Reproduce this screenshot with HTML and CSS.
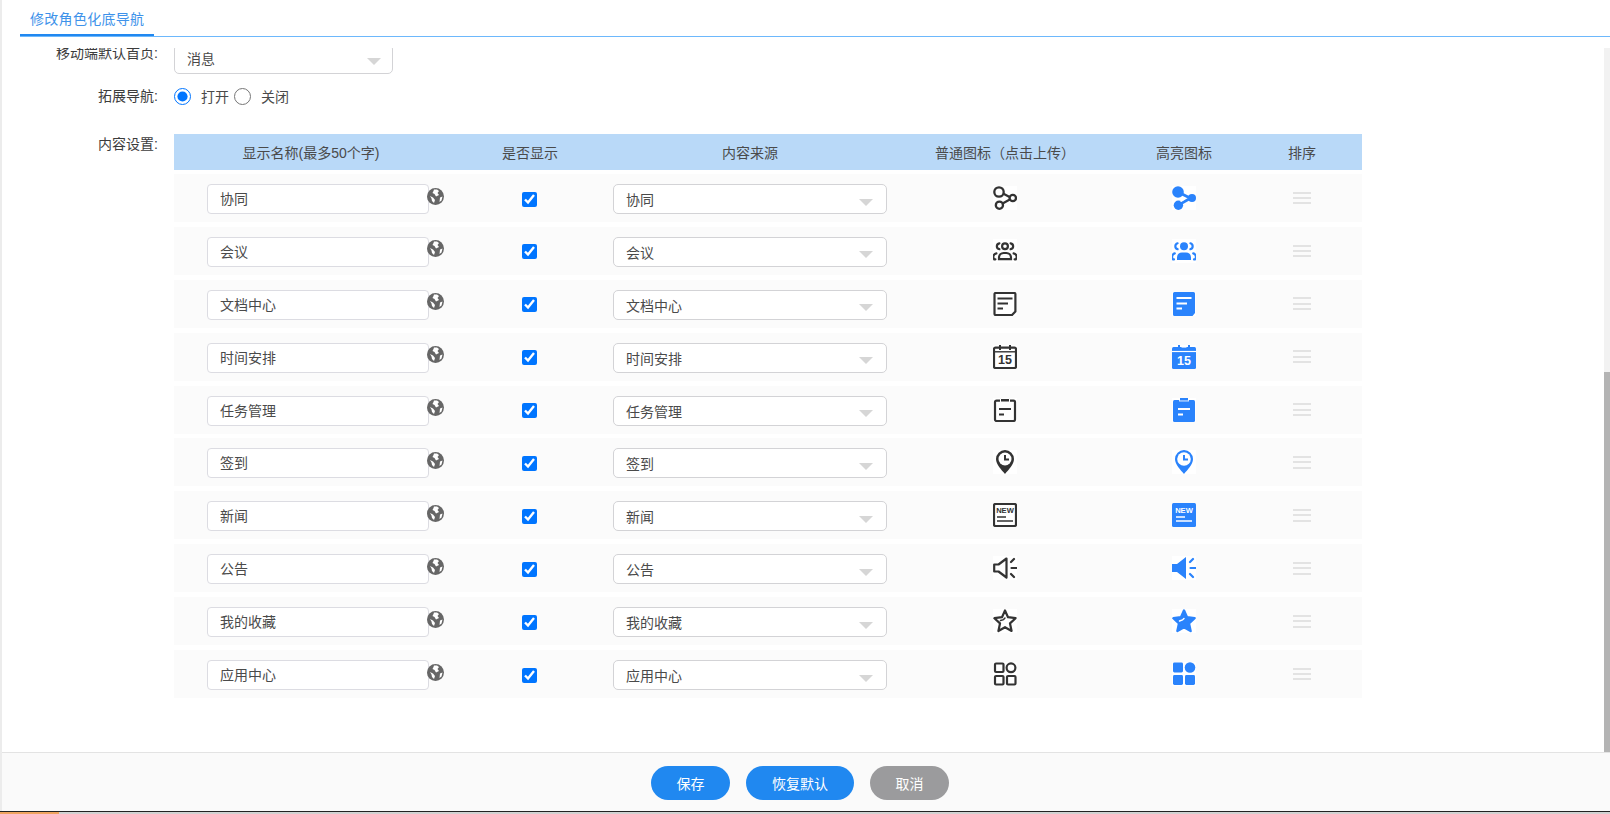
FILE: index.html
```html
<!DOCTYPE html>
<html lang="zh-CN">
<head>
<meta charset="utf-8">
<title>修改角色化底导航</title>
<link rel="stylesheet" href="styles.css">
</head>
<body>
<svg class="defs" width="0" height="0" aria-hidden="true">
  <symbol id="globe" viewBox="0 0 17 17">
    <circle cx="8.5" cy="8.5" r="8.5" fill="#666"/>
    <path d="M7 1.5 10 1.5 12 3 10.5 5 12 7 9 8.5 7.5 6 5.5 5 6.5 3Z M3 8 6 9.5 8 12 7 15 5 13 4.5 10.5Z M13 9.5 15.5 8.5 14.5 12.5 12.5 14Z" fill="#fff"/>
  </symbol>

  <symbol id="i-link" viewBox="0 0 24 24">
    <rect width="24" height="24" fill="#fff"/>
    <g fill="none" stroke="currentColor" stroke-width="2.3">
      <circle cx="6" cy="6" r="4.7"/><circle cx="19.8" cy="12" r="3.2"/><circle cx="6.4" cy="19.2" r="3.6"/>
      <path d="M10.5 7.8 16.6 11M9.6 17.4 16.8 13.6"/>
    </g>
  </symbol>
  <symbol id="f-link" viewBox="0 0 24 24">
    <rect width="24" height="24" fill="#fff"/>
    <g fill="currentColor"><circle cx="6" cy="6" r="5.8"/><circle cx="20" cy="12" r="4"/><circle cx="6.4" cy="19.2" r="4.7"/></g>
    <path d="M10 8 17 11.5M9.5 17.4 17 13" fill="none" stroke="currentColor" stroke-width="2.8"/>
    <path d="M8.5 15.4 12.5 13" stroke="#fff" stroke-width="1.2"/>
  </symbol>

  <symbol id="i-team" viewBox="0 0 24 24">
    <rect width="24" height="24" fill="#fff"/>
    <g fill="none" stroke="currentColor" stroke-width="2.2" stroke-linecap="round">
      <circle cx="12" cy="7.3" r="2.9"/>
      <path d="M6.4 4.3C3 5 3 9.6 6.4 10.2M17.6 4.3C21 5 21 9.6 17.6 10.2"/>
      <path d="M6 20.2V18.6A4.6 4.6 0 0 1 10.6 14H13.4A4.6 4.6 0 0 1 18 18.6V20.2Z"/>
      <path d="M3.4 14.4A3.6 3.6 0 0 0 1.2 20.3H2.4M20.6 14.4A3.6 3.6 0 0 1 22.8 20.3H21.6"/>
    </g>
  </symbol>
  <symbol id="f-team" viewBox="0 0 24 24">
    <rect width="24" height="24" fill="#fff"/>
    <circle cx="12" cy="7.3" r="4" fill="currentColor"/>
    <path d="M5 21V18.4A5 5 0 0 1 10 13.4H14A5 5 0 0 1 19 18.4V21Z" fill="currentColor"/>
    <g fill="none" stroke="currentColor" stroke-width="2.2" stroke-linecap="round">
      <path d="M5.6 4.3C2.6 5 2.6 9.6 5.6 10.2M18.4 4.3C21.4 5 21.4 9.6 18.4 10.2"/>
      <path d="M2.8 14.4A3.6 3.6 0 0 0 1.1 20.4H2M21.2 14.4A3.6 3.6 0 0 1 22.9 20.4H22"/>
    </g>
  </symbol>

  <symbol id="i-doc" viewBox="0 0 24 24">
    <rect width="24" height="24" fill="#fff"/>
    <path d="M2.5 1H21.4A1 1 0 0 1 22.4 2V19.5L19 23H2.5A1 1 0 0 1 1.5 22V2A1 1 0 0 1 2.5 1Z" fill="none" stroke="currentColor" stroke-width="2.2" stroke-linejoin="round"/>
    <path d="M4.5 6.5H19.5M4.5 11.5H15M4.5 16.5H10" stroke="currentColor" stroke-width="2"/>
  </symbol>
  <symbol id="f-doc" viewBox="0 0 24 24">
    <rect width="24" height="24" fill="#fff"/>
    <path d="M2.5 0H21.5A1.5 1.5 0 0 1 23 1.5V21L20.5 24H2.5A1.5 1.5 0 0 1 1 22.5V1.5A1.5 1.5 0 0 1 2.5 0Z" fill="currentColor"/>
    <path d="M4.5 6H19.5M4.5 11.5H15M4.5 16.5H10" stroke="#fff" stroke-width="2"/>
  </symbol>

  <symbol id="i-cal" viewBox="0 0 24 24">
    <rect width="24" height="24" fill="#fff"/>
    <rect x="1" y="2.6" width="22" height="20.4" rx="1.5" fill="none" stroke="currentColor" stroke-width="2.2"/>
    <path d="M7 0V5M17 0V5" stroke="currentColor" stroke-width="2"/>
    <path d="M1 6.8H23" stroke="currentColor" stroke-width="1.4"/>
  </symbol>
  <symbol id="f-cal" viewBox="0 0 24 24">
    <rect width="24" height="24" fill="#fff"/>
    <rect y="2" width="24" height="22" rx="1.5" fill="currentColor"/>
    <path d="M0 6.5H24" stroke="#fff" stroke-width="1.2"/>
    <path d="M7 0V4M17 0V4" stroke="currentColor" stroke-width="2"/>
    <path d="M9.5 2H14.5" stroke="#fff" stroke-width="1.2"/>
  </symbol>

  <symbol id="i-task" viewBox="0 0 24 24">
    <rect width="24" height="24" fill="#fff"/>
    <rect x="2" y="2.6" width="20" height="20.4" rx="1.5" fill="none" stroke="currentColor" stroke-width="2.2"/>
    <path d="M7.5 .5H16.5V4H7.5Z" fill="currentColor" stroke="#fff" stroke-width="1"/>
    <path d="M6 11H18M6 16.5H11" stroke="currentColor" stroke-width="2"/>
  </symbol>
  <symbol id="f-task" viewBox="0 0 24 24">
    <rect width="24" height="24" fill="#fff"/>
    <rect x="1" y="2" width="22" height="22" rx="1.5" fill="currentColor"/>
    <path d="M7 2.8H17" stroke="#fff" stroke-width="1.2"/>
    <path d="M8 0H16V2.4H8Z" fill="currentColor"/>
    <path d="M6 11H18M6 16.5H11" stroke="#fff" stroke-width="2"/>
  </symbol>

  <symbol id="i-pin" viewBox="0 0 24 24">
    <rect width="24" height="24" fill="#fff"/>
    <path d="M12 0A9 9 0 0 0 3 9C3 14.5 8.5 19.8 12 24C15.5 19.8 21 14.5 21 9A9 9 0 0 0 12 0Z" fill="currentColor"/>
    <circle cx="12" cy="9" r="6.5" fill="#fff"/>
    <path d="M12 5V9.5H16" fill="none" stroke="currentColor" stroke-width="2"/>
  </symbol>
  <symbol id="f-pin" viewBox="0 0 24 24">
    <rect width="24" height="24" fill="#fff"/>
    <path d="M12 0A9 9 0 0 0 3 9C3 14.5 8.5 19.8 12 24C15.5 19.8 21 14.5 21 9A9 9 0 0 0 12 0Z" fill="currentColor"/>
    <circle cx="12" cy="9" r="6.8" fill="#fff"/>
    <path d="M12 5V9.5H16" fill="none" stroke="currentColor" stroke-width="2"/>
  </symbol>

  <symbol id="i-news" viewBox="0 0 24 24">
    <rect width="24" height="24" fill="#fff"/>
    <rect x="1" y="1" width="22" height="22" rx="1.5" fill="none" stroke="currentColor" stroke-width="2.2"/>
    <path d="M4 14H13M4 18H20" stroke="currentColor" stroke-width="1.7"/>
  </symbol>
  <symbol id="f-news" viewBox="0 0 24 24">
    <rect width="24" height="24" fill="#fff"/>
    <rect width="24" height="24" rx="1.5" fill="currentColor"/>
    <path d="M4 14H13M4 18H20" stroke="#fff" stroke-width="1.7"/>
  </symbol>

  <symbol id="i-horn" viewBox="0 0 24 24">
    <rect width="24" height="24" fill="#fff"/>
    <path d="M1.2 8.5V15.5H5.5L13.5 21.5V2.5L5.5 8.5Z" fill="none" stroke="currentColor" stroke-width="2.2" stroke-linejoin="round"/>
    <path d="M18 6 21 3M18.5 12H23.5M18 18 21 21" stroke="currentColor" stroke-width="2.2" stroke-linecap="round"/>
  </symbol>
  <symbol id="f-horn" viewBox="0 0 24 24">
    <rect width="24" height="24" fill="#fff"/>
    <path d="M0 8V16H5L14 23V1L5 8Z" fill="currentColor"/>
    <path d="M18 6 21 3M18.5 12H23.5M18 18 21 21" stroke="currentColor" stroke-width="2.2" stroke-linecap="round"/>
  </symbol>

  <symbol id="i-star" viewBox="0 0 24 24">
    <rect width="24" height="24" fill="#fff"/>
    <path d="M12 1.5 15 8.2 22.6 9.2 17 14.4 18.6 22 12 18.2 5.4 22 7 14.4 1.4 9.2 9 8.2Z" fill="none" stroke="currentColor" stroke-width="2.2" stroke-linejoin="round"/>
    <path d="M7.5 11.5 10.5 10.6 12 9" fill="none" stroke="currentColor" stroke-width="1.4" stroke-linecap="round"/>
  </symbol>
  <symbol id="f-star" viewBox="0 0 24 24">
    <rect width="24" height="24" fill="#fff"/>
    <path d="M12 1.5 15 8.2 22.6 9.2 17 14.4 18.6 22 12 18.2 5.4 22 7 14.4 1.4 9.2 9 8.2Z" fill="currentColor" stroke="currentColor" stroke-width="2.4" stroke-linejoin="round"/>
    <path d="M7.5 12 10.5 11 12 9.4" fill="none" stroke="#fff" stroke-width="1.4" stroke-linecap="round"/>
  </symbol>

  <symbol id="i-apps" viewBox="0 0 24 24">
    <rect width="24" height="24" fill="#fff"/>
    <g fill="none" stroke="currentColor" stroke-width="2.2">
      <rect x="2" y="1.5" width="8.5" height="8.5" rx="1"/>
      <circle cx="18" cy="5.8" r="4.4"/>
      <rect x="2" y="14" width="8.5" height="8.5" rx="1"/>
      <rect x="14" y="14" width="8.5" height="8.5" rx="1"/>
    </g>
  </symbol>
  <symbol id="f-apps" viewBox="0 0 24 24">
    <rect width="24" height="24" fill="#fff"/>
    <g fill="currentColor">
      <rect x="1" y=".5" width="10" height="10" rx="1.4"/>
      <circle cx="18" cy="5.5" r="5.3"/>
      <rect x="1" y="13" width="10" height="10" rx="1.4"/>
      <rect x="13" y="13" width="10" height="10" rx="1.4"/>
    </g>
  </symbol>
</svg>

<div class="app">
  <div class="tabs"><div class="tab">修改角色化底导航</div></div>

  <div class="scroller">
    <div class="form">
      <div class="line line-home">
        <div class="label label-top">移动端默认首页:</div>
        <div class="select select-home"><span>消息</span><i class="caret"></i></div>
      </div>
      <div class="line line-radio">
        <div class="label">拓展导航:</div>
        <div class="radios">
          <input class="radio" type="radio" name="ext" checked aria-label="打开"><span class="radio-text">打开</span>
          <input class="radio" type="radio" name="ext" aria-label="关闭"><span class="radio-text">关闭</span>
        </div>
      </div>
      <div class="line line-table">
        <div class="label label-content">内容设置:</div>
        <div class="table">
          <div class="thead">
            <div>显示名称(最多50个字)</div><div>是否显示</div><div>内容来源</div><div>普通图标（点击上传）</div><div>高亮图标</div><div>排序</div>
          </div>
          <div class="tbody">
            <div class="trow">
              <div class="cell-name"><div class="input">协同</div><svg class="globe"><use href="#globe"/></svg></div>
              <div class="cell-c"><input class="check" type="checkbox" checked aria-label="是否显示"></div>
              <div class="cell-c"><div class="select select-row"><span>协同</span><i class="caret"></i></div></div>
              <div class="cell-c"><svg class="ico normal"><use href="#i-link"/></svg></div>
              <div class="cell-c"><svg class="ico hi"><use href="#f-link"/></svg></div>
              <div class="cell-c"><div class="sort"><i></i><i></i><i></i></div></div>
            </div>
            <div class="trow">
              <div class="cell-name"><div class="input">会议</div><svg class="globe"><use href="#globe"/></svg></div>
              <div class="cell-c"><input class="check" type="checkbox" checked aria-label="是否显示"></div>
              <div class="cell-c"><div class="select select-row"><span>会议</span><i class="caret"></i></div></div>
              <div class="cell-c"><svg class="ico normal"><use href="#i-team"/></svg></div>
              <div class="cell-c"><svg class="ico hi"><use href="#f-team"/></svg></div>
              <div class="cell-c"><div class="sort"><i></i><i></i><i></i></div></div>
            </div>
            <div class="trow">
              <div class="cell-name"><div class="input">文档中心</div><svg class="globe"><use href="#globe"/></svg></div>
              <div class="cell-c"><input class="check" type="checkbox" checked aria-label="是否显示"></div>
              <div class="cell-c"><div class="select select-row"><span>文档中心</span><i class="caret"></i></div></div>
              <div class="cell-c"><svg class="ico normal"><use href="#i-doc"/></svg></div>
              <div class="cell-c"><svg class="ico hi"><use href="#f-doc"/></svg></div>
              <div class="cell-c"><div class="sort"><i></i><i></i><i></i></div></div>
            </div>
            <div class="trow">
              <div class="cell-name"><div class="input">时间安排</div><svg class="globe"><use href="#globe"/></svg></div>
              <div class="cell-c"><input class="check" type="checkbox" checked aria-label="是否显示"></div>
              <div class="cell-c"><div class="select select-row"><span>时间安排</span><i class="caret"></i></div></div>
              <div class="cell-c"><svg class="ico normal" viewBox="0 0 24 24"><use href="#i-cal"/><text x="12" y="19.4" class="ico-num">15</text></svg></div>
              <div class="cell-c"><svg class="ico hi" viewBox="0 0 24 24"><use href="#f-cal"/><text x="12" y="19.8" class="ico-num on-fill">15</text></svg></div>
              <div class="cell-c"><div class="sort"><i></i><i></i><i></i></div></div>
            </div>
            <div class="trow">
              <div class="cell-name"><div class="input">任务管理</div><svg class="globe"><use href="#globe"/></svg></div>
              <div class="cell-c"><input class="check" type="checkbox" checked aria-label="是否显示"></div>
              <div class="cell-c"><div class="select select-row"><span>任务管理</span><i class="caret"></i></div></div>
              <div class="cell-c"><svg class="ico normal"><use href="#i-task"/></svg></div>
              <div class="cell-c"><svg class="ico hi"><use href="#f-task"/></svg></div>
              <div class="cell-c"><div class="sort"><i></i><i></i><i></i></div></div>
            </div>
            <div class="trow">
              <div class="cell-name"><div class="input">签到</div><svg class="globe"><use href="#globe"/></svg></div>
              <div class="cell-c"><input class="check" type="checkbox" checked aria-label="是否显示"></div>
              <div class="cell-c"><div class="select select-row"><span>签到</span><i class="caret"></i></div></div>
              <div class="cell-c"><svg class="ico normal"><use href="#i-pin"/></svg></div>
              <div class="cell-c"><svg class="ico hi"><use href="#f-pin"/></svg></div>
              <div class="cell-c"><div class="sort"><i></i><i></i><i></i></div></div>
            </div>
            <div class="trow">
              <div class="cell-name"><div class="input">新闻</div><svg class="globe"><use href="#globe"/></svg></div>
              <div class="cell-c"><input class="check" type="checkbox" checked aria-label="是否显示"></div>
              <div class="cell-c"><div class="select select-row"><span>新闻</span><i class="caret"></i></div></div>
              <div class="cell-c"><svg class="ico normal" viewBox="0 0 24 24"><use href="#i-news"/><text x="12" y="9.8" class="ico-new">NEW</text></svg></div>
              <div class="cell-c"><svg class="ico hi" viewBox="0 0 24 24"><use href="#f-news"/><text x="12" y="9.8" class="ico-new on-fill">NEW</text></svg></div>
              <div class="cell-c"><div class="sort"><i></i><i></i><i></i></div></div>
            </div>
            <div class="trow">
              <div class="cell-name"><div class="input">公告</div><svg class="globe"><use href="#globe"/></svg></div>
              <div class="cell-c"><input class="check" type="checkbox" checked aria-label="是否显示"></div>
              <div class="cell-c"><div class="select select-row"><span>公告</span><i class="caret"></i></div></div>
              <div class="cell-c"><svg class="ico normal"><use href="#i-horn"/></svg></div>
              <div class="cell-c"><svg class="ico hi"><use href="#f-horn"/></svg></div>
              <div class="cell-c"><div class="sort"><i></i><i></i><i></i></div></div>
            </div>
            <div class="trow">
              <div class="cell-name"><div class="input">我的收藏</div><svg class="globe"><use href="#globe"/></svg></div>
              <div class="cell-c"><input class="check" type="checkbox" checked aria-label="是否显示"></div>
              <div class="cell-c"><div class="select select-row"><span>我的收藏</span><i class="caret"></i></div></div>
              <div class="cell-c"><svg class="ico normal"><use href="#i-star"/></svg></div>
              <div class="cell-c"><svg class="ico hi"><use href="#f-star"/></svg></div>
              <div class="cell-c"><div class="sort"><i></i><i></i><i></i></div></div>
            </div>
            <div class="trow">
              <div class="cell-name"><div class="input">应用中心</div><svg class="globe"><use href="#globe"/></svg></div>
              <div class="cell-c"><input class="check" type="checkbox" checked aria-label="是否显示"></div>
              <div class="cell-c"><div class="select select-row"><span>应用中心</span><i class="caret"></i></div></div>
              <div class="cell-c"><svg class="ico normal"><use href="#i-apps"/></svg></div>
              <div class="cell-c"><svg class="ico hi"><use href="#f-apps"/></svg></div>
              <div class="cell-c"><div class="sort"><i></i><i></i><i></i></div></div>
            </div>
          </div>
        </div>
      </div>
    </div>
    <div class="scrollbar"><div class="thumb"></div></div>
  </div>

  <div class="footer">
    <button class="btn primary" type="button">保存</button>
    <button class="btn primary wide" type="button">恢复默认</button>
    <button class="btn muted" type="button">取消</button>
  </div>
</div>
<div class="taskbar"><div class="taskbar-fill"></div></div>
</body>
</html>
```

FILE: styles.css
```css
* { box-sizing: border-box; }
html, body { margin: 0; height: 100%; overflow: hidden; background: #fff; }
body {
  display: flex;
  flex-direction: column;
  height: 814px;
  font-family: "Liberation Sans", "Noto Sans CJK SC", sans-serif;
  font-size: 14px;
  color: #4a4a4a;
}
.defs { position: absolute; }
.ico-num { font: 700 12.5px "Liberation Sans", sans-serif; text-anchor: middle; fill: currentColor; }
.ico-new { font: 700 7.6px "Liberation Sans", sans-serif; text-anchor: middle; fill: currentColor; }
.ico-num.on-fill, .ico-new.on-fill { fill: #fff; }

.app {
  flex: 1;
  min-height: 0;
  display: flex;
  flex-direction: column;
  border-left: 2px solid #ececec;
}

.tabs {
  height: 37px;
  margin-left: 18px;
  border-bottom: 1px solid #6db8fc;
  flex: none;
}
.tab {
  display: inline-block;
  height: 36px;
  line-height: 38px;
  padding: 0 10px;
  letter-spacing: .3px;
  color: #3e92ea;
  border-bottom: 2px solid #2188f0;
}

.scroller {
  flex: 1;
  min-height: 0;
  margin-top: 11px;
  display: flex;
  overflow: hidden;
}
.form { flex: 1; min-width: 0; }
.line { display: flex; }
.label {
  width: 156px;
  flex: none;
  text-align: right;
  font-size: 14px;
  line-height: 20px;
  color: #3c3c3c;
  margin-right: 16px;
}
.line-home { height: 30px; margin-top: -4px; }
.label-top { line-height: 18px; }
.line-radio { height: 20px; margin-top: 12px; }
.line-table { margin-top: 28px; }
.label-content { margin-top: 0; }

.select {
  display: flex;
  align-items: center;
  justify-content: space-between;
  height: 30px;
  padding: 0 13px 0 12px;
  background: #fff;
  border: 1px solid #d3d3d6;
  border-radius: 5px;
}
.select-home { width: 219px; padding: 0 11px 2px 12px; }
.select-row { width: 274px; margin-top: 2px; }
.caret {
  width: 0;
  height: 0;
  margin-top: 6px;
  border-left: 7px solid transparent;
  border-right: 7px solid transparent;
  border-top: 7px solid #d6d6d6;
}

.radios { display: flex; align-items: center; height: 20px; }
.radio { width: 17px; height: 17px; margin: 0 10px 0 0; accent-color: #0075ff; }
.radio-text { margin-right: 5px; }

.table { width: 1188px; }
.thead, .trow {
  display: grid;
  grid-template-columns: 274px 164px 276px 234px 124px 112px 4px;
  align-items: center;
}
.thead {
  height: 36px;
  background: #b9d9f8;
  text-align: center;
  font-size: 14px;
  color: #4a4a4a;
}
.tbody {
  display: flex;
  flex-direction: column;
  gap: 4.9px;
  margin-top: 4px;
}
.trow { height: 48px; background: #fbfbfb; }
.cell-c { display: flex; justify-content: center; align-items: center; }
.cell-name { display: flex; align-items: center; padding-left: 33px; }
.input {
  width: 222px;
  height: 30px;
  flex: none;
  line-height: 28px;
  margin-top: 2px;
  padding: 0 12px;
  background: #fff;
  border: 1px solid #dcdce2;
  border-radius: 4px;
}
.globe { width: 17px; height: 17px; flex: none; margin: -4px 0 0 -2px; }
.check { width: 15px; height: 15px; margin: 2px 1px 0 0; accent-color: #0075ff; }
.ico { width: 24px; height: 24px; display: block; }
.normal { color: #333; }
.hi { color: #2a83fc; }
.sort { display: flex; flex-direction: column; gap: 3.4px; width: 18px; }
.sort i { display: block; height: 2px; background: #e3e3e3; }

.scrollbar { width: 6px; flex: none; background: #f2f2f2; }
.thumb { height: 380px; margin-top: 324px; background: #b4b4b4; }

.footer {
  flex: none;
  height: 59px;
  display: flex;
  align-items: center;
  justify-content: center;
  gap: 16px;
  padding: 0 12px 0 0;
  background: #fafafa;
  border-top: 1px solid #e3e3e3;
}
.btn {
  width: 79px;
  height: 34px;
  margin-top: 2px;
  padding: 0;
  border: 0;
  border-radius: 17px;
  font: inherit;
  color: #fff;
}
.wide { width: 108px; }
.primary { background: #2088f0; }
.muted { background: #9b9b9d; }

.taskbar { flex: none; height: 3px; background: #d2d2d2; border-top: 1px solid #222; }
.taskbar-fill { width: 59px; height: 2px; background: #f0a460; }
```
